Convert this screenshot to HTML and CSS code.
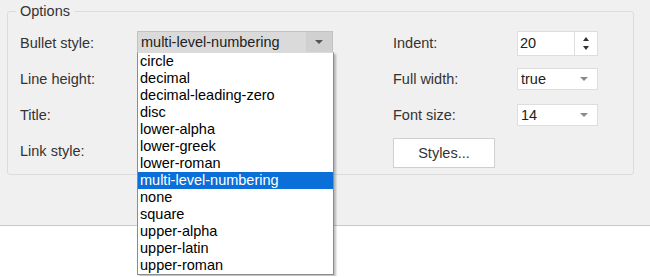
FILE: index.html
```html
<!DOCTYPE html>
<html lang="en">

<head>
    <meta charset="UTF-8">
    <meta name="viewport" content="width=device-width, initial-scale=1.0">
    <title>Options</title>
    <link rel="stylesheet" href="styles.css">
</head>

<body>
    <div class="panel">
        <fieldset class="options">
            <legend>Options</legend>
            <div class="options-grid">
                <label class="field-label">Bullet style:</label>
                <div class="select-wrap">
                    <div class="select select-open">
                        <span class="select-value">multi-level-numbering</span>
                        <span class="select-arrow"></span>
                    </div>
                    <ul class="dropdown">
                        <li>circle</li>
                        <li>decimal</li>
                        <li>decimal-leading-zero</li>
                        <li>disc</li>
                        <li>lower-alpha</li>
                        <li>lower-greek</li>
                        <li>lower-roman</li>
                        <li class="selected">multi-level-numbering</li>
                        <li>none</li>
                        <li>square</li>
                        <li>upper-alpha</li>
                        <li>upper-latin</li>
                        <li>upper-roman</li>
                    </ul>
                </div>
                <span></span>
                <label class="field-label">Indent:</label>
                <div class="spin">
                    <span class="spin-value">20</span>
                    <span class="spin-buttons">
                        <span class="spin-up"></span>
                        <span class="spin-down"></span>
                    </span>
                </div>

                <label class="field-label">Line height:</label>
                <span></span>
                <span></span>
                <label class="field-label">Full width:</label>
                <div class="select small">
                    <span class="select-value">true</span>
                    <span class="select-arrow"></span>
                </div>

                <label class="field-label">Title:</label>
                <span></span>
                <span></span>
                <label class="field-label">Font size:</label>
                <div class="select small">
                    <span class="select-value">14</span>
                    <span class="select-arrow"></span>
                </div>

                <label class="field-label">Link style:</label>
                <span></span>
                <span></span>
                <button class="btn">Styles...</button>
                <span></span>
            </div>
        </fieldset>
    </div>
    <div class="page-rest"></div>
</body>

</html>
```

FILE: styles.css
```css
body {
    margin: 0;
    background-color: #ffffff;
    color: #333333;
    font-family: "Liberation Sans", Arial, sans-serif;
    font-size: 14.5px;
}

.panel {
    position: relative;
    z-index: 1;
    height: 226px;
    padding: 5px 0 0 7px;
    box-sizing: border-box;
    background-color: #f0f0f0;
    border-bottom: 1px solid #c9c9c9;
}

.page-rest {
    height: 50px;
    background-color: #ffffff;
}

.options {
    width: 627px;
    height: 170px;
    margin: 0;
    padding: 8px 12px 0 12px;
    box-sizing: border-box;
    border: 1px solid #dcdcdc;
    border-radius: 3px;
}

.options legend {
    margin-left: -4px;
    padding: 0 4px;
    font-size: 14.5px;
    line-height: 12px;
    color: #333333;
}

.options-grid {
    display: grid;
    grid-template-columns: 117px 196px 60px 124px 81px;
    grid-auto-rows: 36px;
    align-items: center;
}

.field-label {
    color: #333333;
}

.select-wrap {
    position: relative;
}

.select {
    display: flex;
    align-items: center;
    height: 22px;
    box-sizing: border-box;
    background-color: #ffffff;
    border: 1px solid #dedede;
}

.select-value {
    flex: 1;
    padding-left: 3px;
    color: #222222;
}

.select-arrow {
    width: 26px;
    height: 100%;
    display: flex;
    align-items: center;
    justify-content: center;
}

.select-arrow::before {
    content: '';
    border-left: 4px solid transparent;
    border-right: 4px solid transparent;
    border-top: 4px solid #8a8a8a;
}

.select-open {
    background-color: #dadada;
    border-color: #c2c2c2;
    margin-top: -2px;
}

.select-open .select-arrow {
    background-color: #d0d0d0;
}

.select-open .select-arrow::before {
    border-top-color: #555555;
}

.dropdown {
    position: absolute;
    top: 19px;
    left: 0;
    width: 197px;
    margin: 0;
    padding: 0;
    list-style: none;
    background-color: #ffffff;
    border: 1px solid #8c8c8c;
    border-top-color: #dadada;
    box-shadow: 2px 2px 2px rgba(0, 0, 0, 0.25);
    box-sizing: border-box;
    z-index: 2;
}

.dropdown li {
    height: 17px;
    line-height: 17px;
    padding-left: 2px;
    color: #000000;
}

.dropdown li.selected {
    background-color: #0a6fd8;
    color: #ffffff;
}

.spin {
    display: flex;
    height: 25px;
    margin-top: 1px;
    box-sizing: border-box;
    background-color: #ffffff;
    border: 1px solid #dedede;
}

.spin-value {
    flex: 1;
    padding: 3px 0 0 2px;
    color: #222222;
}

.spin-buttons {
    width: 22px;
    border-left: 1px solid #dedede;
    display: flex;
    flex-direction: column;
    align-items: center;
    justify-content: center;
    gap: 5px;
}

.spin-up {
    border-left: 3px solid transparent;
    border-right: 3px solid transparent;
    border-bottom: 4px solid #333333;
}

.spin-down {
    border-left: 3px solid transparent;
    border-right: 3px solid transparent;
    border-top: 4px solid #333333;
}

.btn {
    width: 102px;
    height: 30px;
    margin-top: 3px;
    background-color: #ffffff;
    border: 1px solid #cfcfcf;
    color: #333333;
    font-family: inherit;
    font-size: 14.5px;
    padding: 0;
}
```
